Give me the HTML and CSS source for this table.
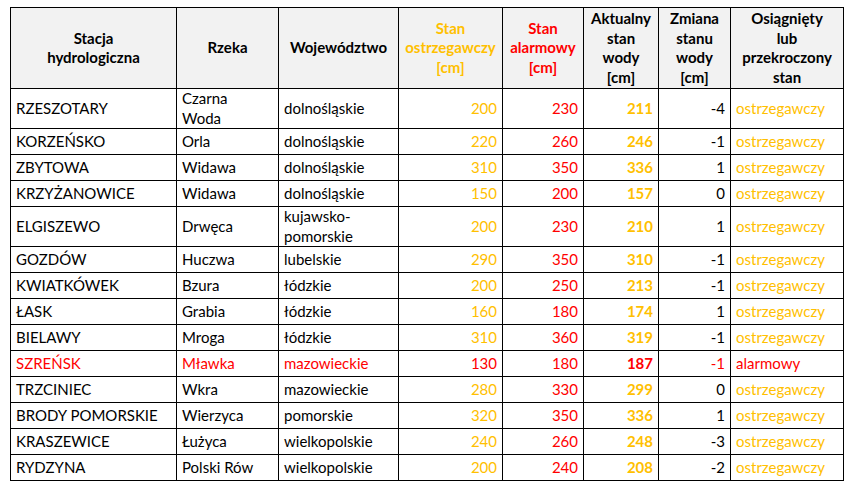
FILE: index.html
```html
<!DOCTYPE html>
<html lang="pl">
<head>
<meta charset="utf-8">
<title>Stany wód</title>
<link rel="stylesheet" href="styles.css">
</head>
<body>
<table class="tbl">
  <colgroup>
    <col class="c1"><col class="c2"><col class="c3"><col class="c4"><col class="c5"><col class="c6"><col class="c7"><col class="c8">
  </colgroup>
  <thead>
    <tr class="head">
      <th>Stacja<br>hydrologiczna</th>
      <th>Rzeka</th>
      <th>Województwo</th>
      <th class="o">Stan<br>ostrzegawczy<br>[cm]</th>
      <th class="r">Stan<br>alarmowy<br>[cm]</th>
      <th>Aktualny<br>stan<br>wody<br>[cm]</th>
      <th>Zmiana<br>stanu<br>wody<br>[cm]</th>
      <th>Osiągnięty<br>lub<br>przekroczony<br>stan</th>
    </tr>
  </thead>
  <tbody>
    <tr class="dbl"><td>RZESZOTARY</td><td>Czarna<br>Woda</td><td>dolnośląskie</td><td class="n o">200</td><td class="n r">230</td><td class="n o b">211</td><td class="n">-4</td><td class="o">ostrzegawczy</td></tr>
    <tr><td>KORZEŃSKO</td><td>Orla</td><td>dolnośląskie</td><td class="n o">220</td><td class="n r">260</td><td class="n o b">246</td><td class="n">-1</td><td class="o">ostrzegawczy</td></tr>
    <tr><td>ZBYTOWA</td><td>Widawa</td><td>dolnośląskie</td><td class="n o">310</td><td class="n r">350</td><td class="n o b">336</td><td class="n">1</td><td class="o">ostrzegawczy</td></tr>
    <tr><td>KRZYŻANOWICE</td><td>Widawa</td><td>dolnośląskie</td><td class="n o">150</td><td class="n r">200</td><td class="n o b">157</td><td class="n">0</td><td class="o">ostrzegawczy</td></tr>
    <tr class="dbl"><td>ELGISZEWO</td><td>Drwęca</td><td>kujawsko-<br>pomorskie</td><td class="n o">200</td><td class="n r">230</td><td class="n o b">210</td><td class="n">1</td><td class="o">ostrzegawczy</td></tr>
    <tr><td>GOZDÓW</td><td>Huczwa</td><td>lubelskie</td><td class="n o">290</td><td class="n r">350</td><td class="n o b">310</td><td class="n">-1</td><td class="o">ostrzegawczy</td></tr>
    <tr><td>KWIATKÓWEK</td><td>Bzura</td><td>łódzkie</td><td class="n o">200</td><td class="n r">250</td><td class="n o b">213</td><td class="n">-1</td><td class="o">ostrzegawczy</td></tr>
    <tr><td>ŁASK</td><td>Grabia</td><td>łódzkie</td><td class="n o">160</td><td class="n r">180</td><td class="n o b">174</td><td class="n">1</td><td class="o">ostrzegawczy</td></tr>
    <tr><td>BIELAWY</td><td>Mroga</td><td>łódzkie</td><td class="n o">310</td><td class="n r">360</td><td class="n o b">319</td><td class="n">-1</td><td class="o">ostrzegawczy</td></tr>
    <tr class="alarm"><td>SZREŃSK</td><td>Mławka</td><td>mazowieckie</td><td class="n">130</td><td class="n">180</td><td class="n b">187</td><td class="n">-1</td><td>alarmowy</td></tr>
    <tr><td>TRZCINIEC</td><td>Wkra</td><td>mazowieckie</td><td class="n o">280</td><td class="n r">330</td><td class="n o b">299</td><td class="n">0</td><td class="o">ostrzegawczy</td></tr>
    <tr><td>BRODY POMORSKIE</td><td>Wierzyca</td><td>pomorskie</td><td class="n o">320</td><td class="n r">350</td><td class="n o b">336</td><td class="n">1</td><td class="o">ostrzegawczy</td></tr>
    <tr><td>KRASZEWICE</td><td>Łużyca</td><td>wielkopolskie</td><td class="n o">240</td><td class="n r">260</td><td class="n o b">248</td><td class="n">-3</td><td class="o">ostrzegawczy</td></tr>
    <tr><td>RYDZYNA</td><td>Polski Rów</td><td>wielkopolskie</td><td class="n o">200</td><td class="n r">240</td><td class="n o b">208</td><td class="n">-2</td><td class="o">ostrzegawczy</td></tr>
  </tbody>
</table>
</body>
</html>
```
FILE: styles.css
```css
html, body {
  margin: 0;
  background: #fff;
}
body {
  padding: 7px 0 0 10px;
  font-family: Lato, "Liberation Sans", sans-serif;
  font-size: 15px;
  color: #000;
}
.tbl {
  border-collapse: collapse;
  table-layout: fixed;
  width: 833px;
}
.c1 { width: 166px; }
.c2 { width: 102px; }
.c3 { width: 120px; }
.c4 { width: 104px; }
.c5 { width: 81px; }
.c6 { width: 75px; }
.c7 { width: 72px; }
.c8 { width: 113px; }
.tbl th,
.tbl td {
  border: 1px solid #000;
  padding: 0 5px;
  line-height: 19.5px;
  vertical-align: middle;
  text-align: left;
  white-space: nowrap;
  overflow: hidden;
}
.tbl th {
  background: #f2f2f2;
  text-align: center;
  font-weight: 700;
}
.head { height: 81px; }
.tbl tbody tr { height: 26px; }
.tbl tbody tr.dbl { height: 40px; }
.tbl td.n { text-align: right; }
.o { color: #ffc000; }
.r { color: #ff0000; }
.b { font-weight: 700; }
.alarm td { color: #ff0000; }
```
